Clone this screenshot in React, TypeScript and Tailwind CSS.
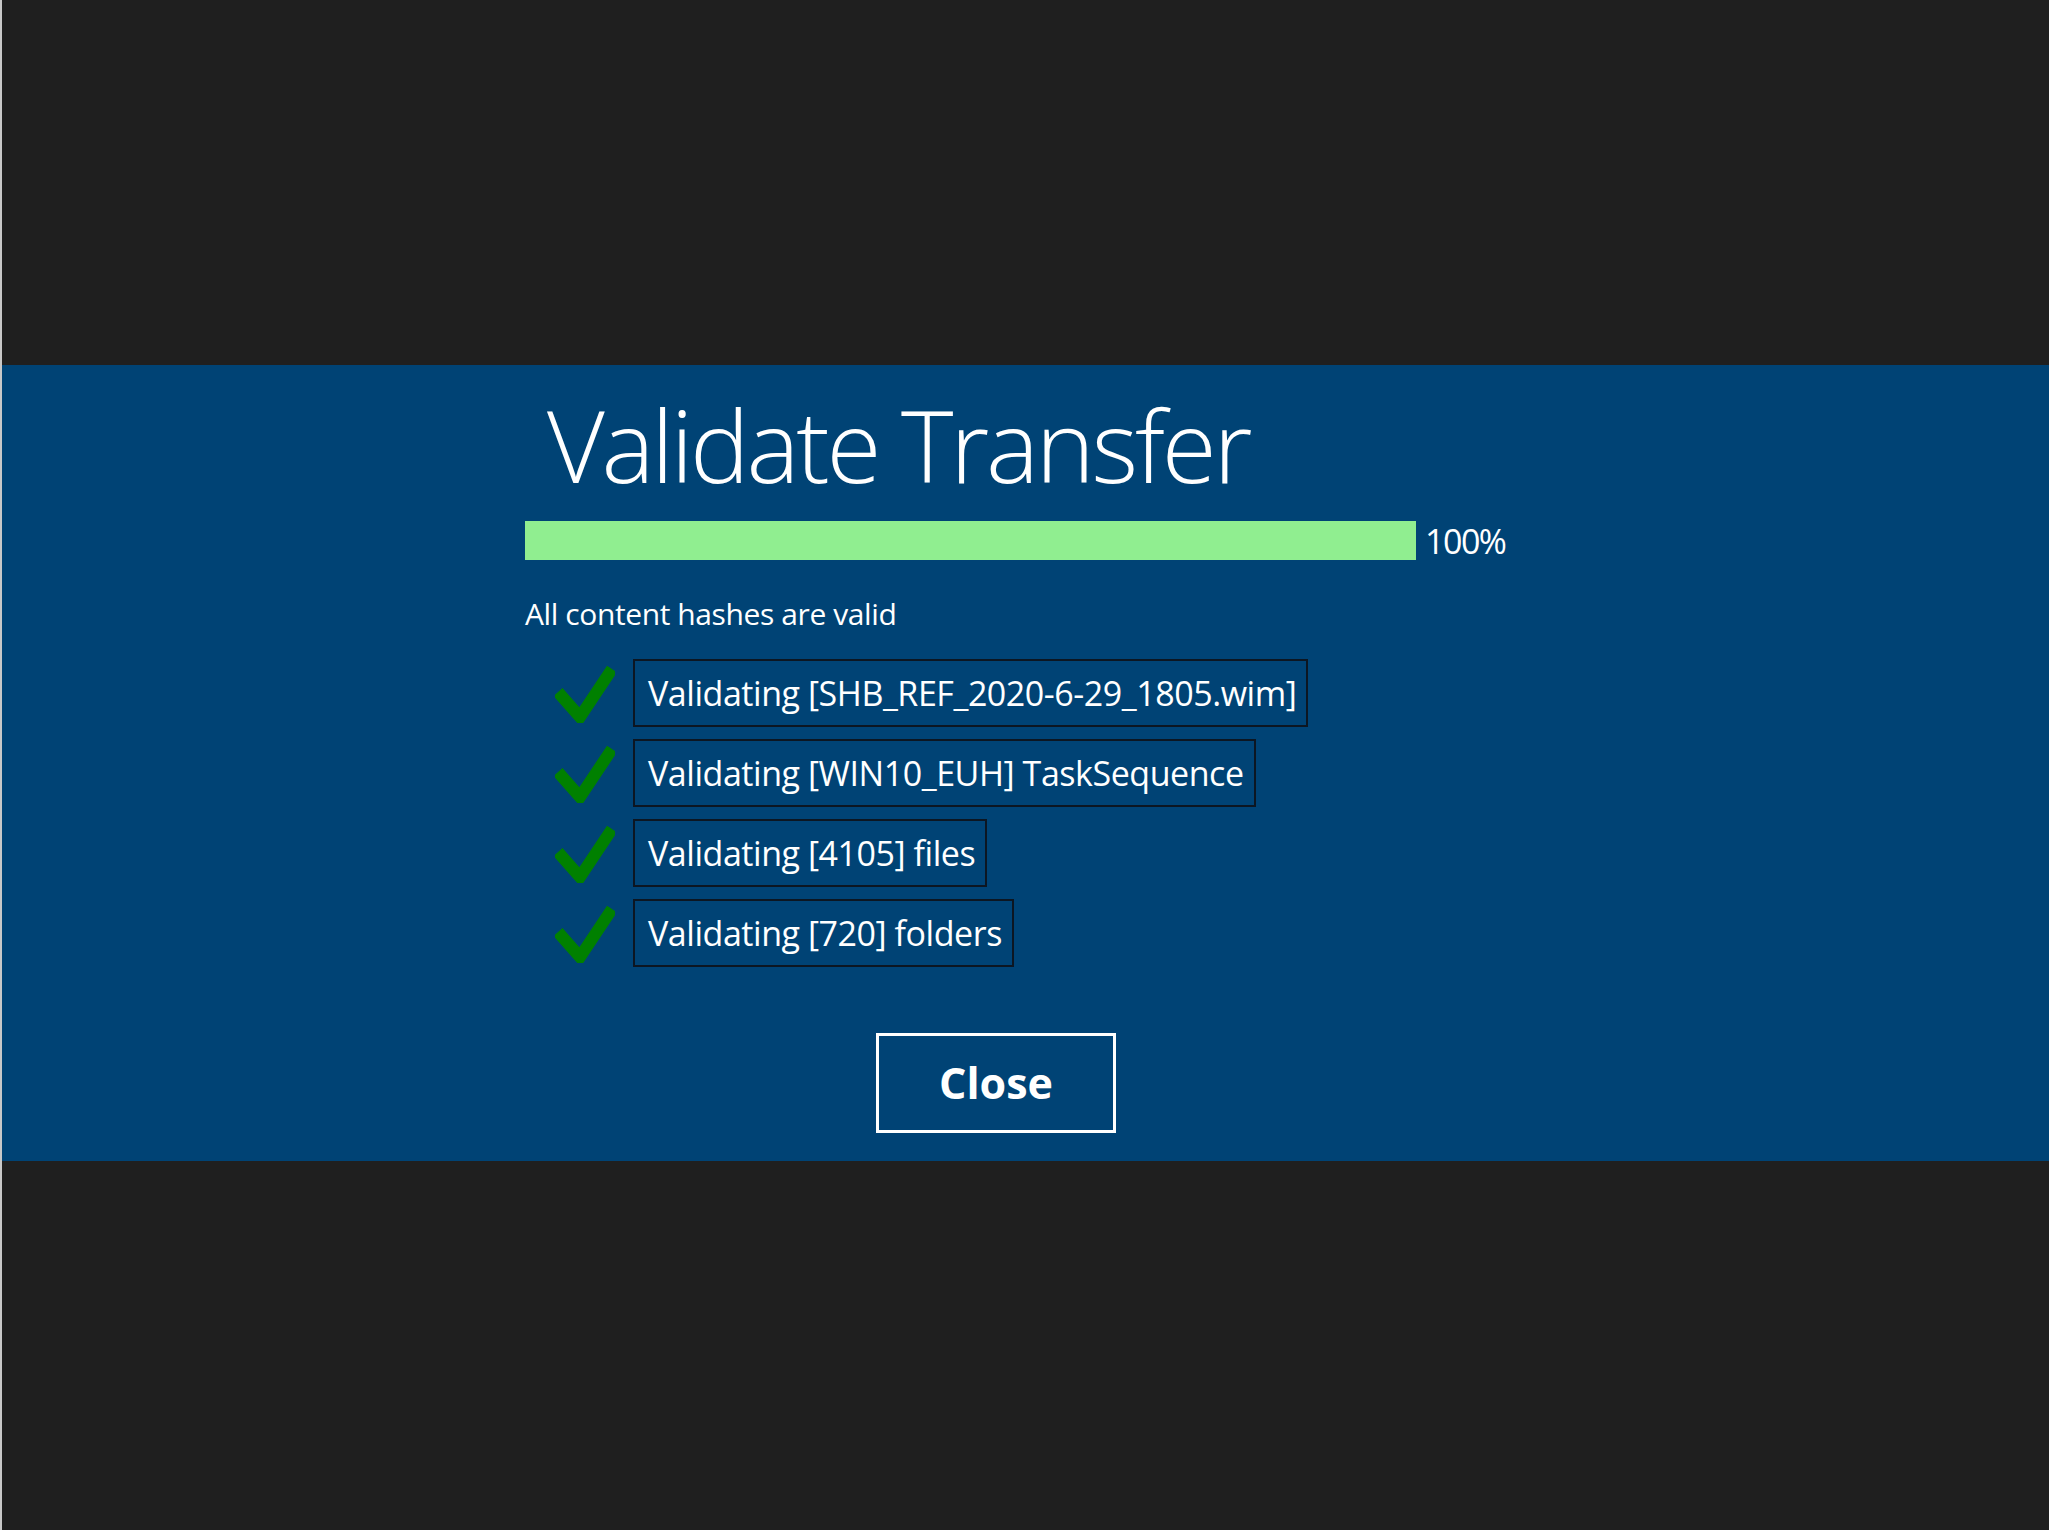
// Validate Transfer dialog: progress, status line, per-item validation results and a close button.
const items = [
  "Validating [SHB_REF_2020-6-29_1805.wim]",
  "Validating [WIN10_EUH] TaskSequence",
  "Validating [4105] files",
  "Validating [720] folders",
];

const CheckMark = () => (
  <svg width="60" height="60" viewBox="0 0 60 60" className="shrink-0">
    <polyline points="3,29 25,54 57,6" fill="none" stroke="#008000" strokeWidth="12" />
  </svg>
);

export default function App() {
  return (
    <div className="flex min-h-[1530px] w-full bg-[#1f1f1f] font-['Open_Sans',sans-serif] text-white">
      <div className="w-[2px] shrink-0 bg-[#c8c8c8]" />
      <div className="flex flex-1 flex-col">
        <div className="h-[365px]" />
        <section className="h-[796px] bg-[#004375] pl-[523px] pt-[29px]">
          <div className="flex w-[1000px] flex-col">
            <h1 className="ml-[22px] text-[100px] font-light leading-[100px] tracking-[-3.2px]">
              Validate Transfer
            </h1>
            <div className="mt-[27px] flex items-center gap-[9px]">
              <div className="h-[39px] w-[891px] shrink-0 bg-[#90ee90]" />
              <span className="text-[34px] leading-none tracking-[-1.5px]">100%</span>
            </div>
            <p className="mt-[34px] text-[30px] leading-[40px] tracking-[-0.4px]">
              All content hashes are valid
            </p>
            <ul className="mt-[25px] flex flex-col gap-[12px]">
              {items.map((item) => (
                <li key={item} className="ml-[30px] flex items-center gap-[18px]">
                  <CheckMark />
                  <span className="flex h-[68px] items-center border-2 border-[#0c1622] pl-[13px] pr-[10px] text-[34px] tracking-[-0.45px]">
                    {item}
                  </span>
                </li>
              ))}
            </ul>
            <button className="ml-[351px] mt-[66px] flex h-[100px] w-[240px] items-center justify-center border-[3px] border-white text-[43px] font-bold">
              Close
            </button>
          </div>
        </section>
      </div>
    </div>
  );
}
